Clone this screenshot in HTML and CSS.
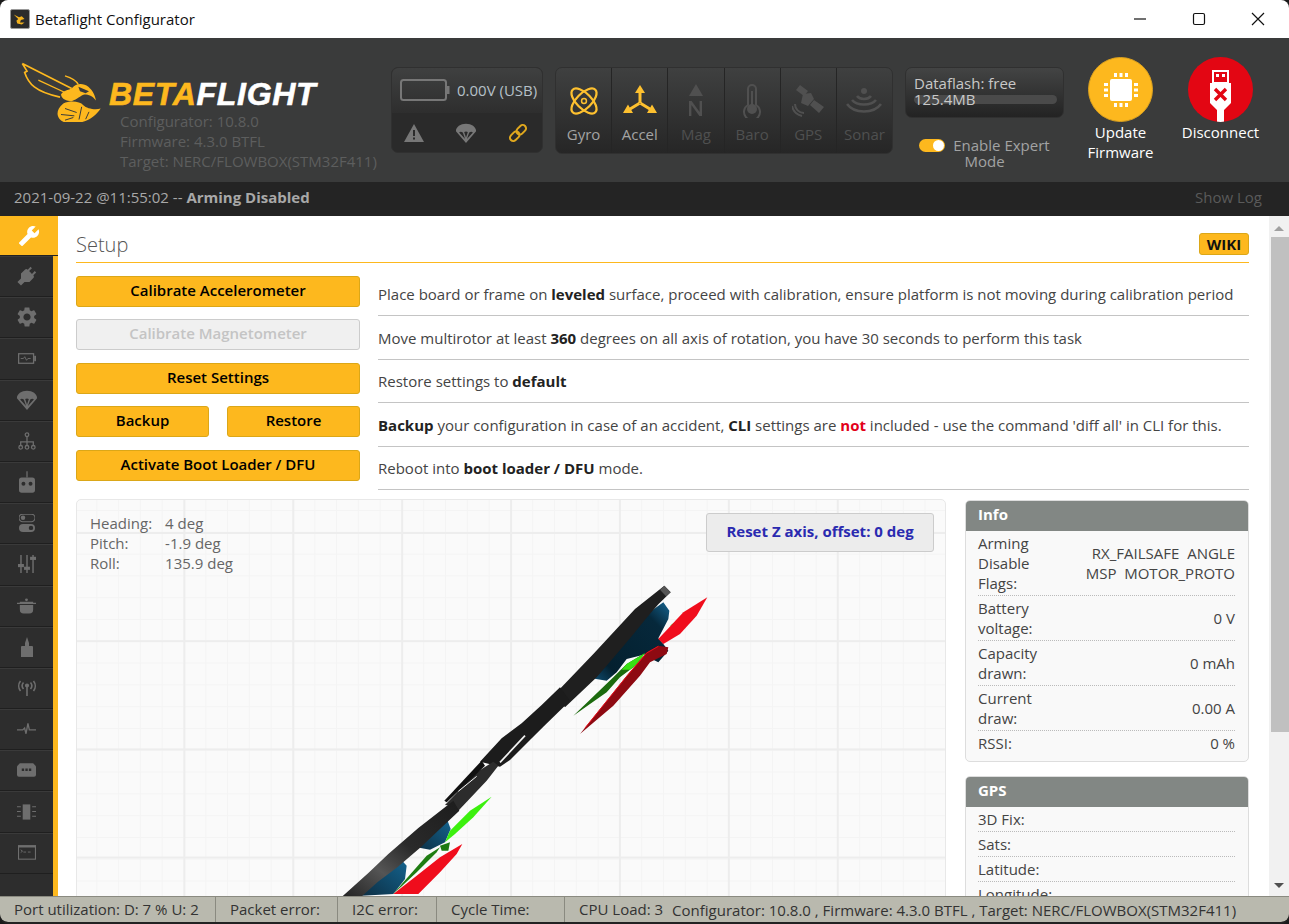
FILE: index.html
```html
<!DOCTYPE html>
<html lang="en">
<head>
    <meta charset="UTF-8">
    <title>Betaflight Configurator</title>
    <link rel="stylesheet" href="styles.css">
</head>
<body>
<div class="window">
    <div class="titlebar">
        <span class="app-icon">
            <svg viewBox="0 0 20 20" width="18" height="18"><path d="M3 5l6 3 3-1 3 3-4 1-1 3 5 0-3 2-5-1-1-3 2-2z" fill="#f2b11e"/></svg>
        </span>
        <span class="app-title">Betaflight Configurator</span>
        <div class="win-controls">
            <svg class="win-btn" viewBox="0 0 58 38"><path d="M23 19h12" stroke="#111" stroke-width="1.2"/></svg>
            <svg class="win-btn" viewBox="0 0 58 38"><rect x="23.500" y="13.500" width="11" height="11" rx="1.500" fill="none" stroke="#111" stroke-width="1.2"/></svg>
            <svg class="win-btn" viewBox="0 0 58 38"><path d="M23 13l12 12M35 13L23 25" stroke="#111" stroke-width="1.2"/></svg>
        </div>
    </div>

    <header class="topbar">
        <div class="brand">
            <div class="logo-row">
                <svg class="wasp" viewBox="0 0 270 200" width="90" height="67">
                    <g fill="none" stroke="#fdb81e" stroke-width="5">
                        <path d="M22 25L170 100M22 25L36 48 29 52C40 85 60 110 135 126"/>
                        <path d="M70 75L150 112" stroke-width="4"/>
                        <path d="M150 62C170 68 185 78 190 88" stroke-width="4"/>
                    </g>
                    <path d="M138 118C145 105 165 105 172 98 182 84 205 82 220 95 235 108 240 122 243 136 232 122 222 118 208 118 195 122 188 132 170 138 155 138 140 132 138 118z" fill="#fdb81e"/>
                    <path d="M190 95L222 108 212 114 195 108z" fill="#3a3b3b"/>
                    <path d="M145 145C165 135 195 138 205 150 215 160 240 165 257 160 240 185 215 205 165 205 130 203 112 172 145 145z" fill="#fdb81e"/>
                    <path d="M150 160l35 12M138 178l40 4M150 195l25-8M200 155l-8 38M222 170l-10 22" stroke="#3a3b3b" stroke-width="3" fill="none"/>
                </svg>
                <div class="logo-text"><span class="logo-beta">BETA</span>FLIGHT</div>
            </div>
            <div class="versions">
                <div>Configurator: 10.8.0</div>
                <div>Firmware: 4.3.0 BTFL</div>
                <div>Target: NERC/FLOWBOX(STM32F411)</div>
            </div>
        </div>

        <div class="battery-box">
            <div class="battery-top">
                <svg viewBox="0 0 50 22" width="50" height="22"><rect x="1" y="1" width="45" height="20" rx="2.500" fill="none" stroke="#777" stroke-width="2"/><rect x="47" y="7" width="2.500" height="8" fill="#777"/></svg>
                <span>0.00V (USB)</span>
            </div>
            <div class="battery-bottom">
                <svg viewBox="0 0 20 18" width="20" height="18"><path d="M10 0l10 18H0z" fill="#777"/><path d="M9 6h2v6H9zM9 13.500h2v2H9z" fill="#2b2b2b"/></svg>
                <svg viewBox="0 0 24 24" width="22" height="22"><use href="#chute" fill="#777"/></svg>
                <svg viewBox="0 0 24 24" width="20" height="20" fill="none" stroke="#e0a81e" stroke-width="2.400"><g transform="rotate(-45 12 12)"><rect x="0" y="8" width="13" height="8" rx="4"/><rect x="11" y="8" width="13" height="8" rx="4"/></g></svg>
            </div>
        </div>

        <div class="sensors">
            <div class="sensor on">
                <svg viewBox="-1 -1 34 34" width="32" height="32" fill="none" stroke="#fdc02f" stroke-width="2.400"><ellipse cx="16" cy="16" rx="17" ry="8" transform="rotate(45 16 16)"/><ellipse cx="16" cy="16" rx="17" ry="8" transform="rotate(-45 16 16)"/><circle cx="16" cy="16" r="2.600" stroke-width="1.600"/></svg>
                <span>Gyro</span>
            </div>
            <div class="sensor on">
                <svg viewBox="0 0 34 32" width="34" height="32" fill="#fdc02f"><path d="M17 0l5 8h-3.500v10h-3V8H12z"/><path d="M15.700 17l1.600 2.600-9 5.400 1.700 3H0l5-8.500 1.700 3z"/><path d="M18.300 17l-1.600 2.600 9 5.400-1.700 3H34l-5-8.500-1.700 3z"/></svg>
                <span>Accel</span>
            </div>
            <div class="sensor">
                <svg viewBox="0 0 20 34" width="20" height="34" fill="#505050"><path d="M10 0l7 12H3z"/><path d="M3 17h2.600l8 11V17H16v15h-2.600l-8-11v11H3z"/></svg>
                <span>Mag</span>
            </div>
            <div class="sensor">
                <svg viewBox="0 0 20 34" width="20" height="34"><path d="M6 20V4a4 4 0 0 1 8 0v16a8 8 0 1 1-8 0z" transform="translate(0 1)" fill="none" stroke="#505050" stroke-width="2"/><circle cx="10" cy="25" r="5" fill="#505050"/><path d="M10 7v16" stroke="#505050" stroke-width="2"/></svg>
                <span>Baro</span>
            </div>
            <div class="sensor">
                <svg viewBox="0 0 32 32" width="32" height="32" fill="#505050"><path d="M8 0l8 6-4 5-8-6zM22 15l10 7-5 6-9-8z"/><path d="M11 9l8-1 3 6-6 7-7-3z"/><path d="M3 19a9 9 0 0 0 9 9M0 21a13 13 0 0 0 10 10" fill="none" stroke="#505050" stroke-width="2"/></svg>
                <span>GPS</span>
            </div>
            <div class="sensor">
                <svg viewBox="0 0 36 28" width="36" height="28" fill="none" stroke="#505050" stroke-width="2.600"><circle cx="18" cy="4" r="3" fill="#505050" stroke="none"/><path d="M11 9c3 4 11 4 14 0M6 13c5 6 19 6 24 0M1 17c7 10 27 10 34 0"/></svg>
                <span>Sonar</span>
            </div>
        </div>

        <div class="flash-col">
            <div class="dataflash">
                <div>Dataflash: free</div>
                <div class="flash-bar">125.4MB</div>
            </div>
            <div class="expert"><span class="toggle"></span> Enable Expert Mode</div>
        </div>

        <div class="round-action update">
            <span class="circle yellow">
                <svg viewBox="0 0 40 40" width="40" height="40" fill="#fff"><rect x="9" y="9" width="22" height="22" rx="2"/><path d="M13 3h3v4h-3zM18.500 3h3v4h-3zM24 3h3v4h-3zM13 33h3v4h-3zM18.500 33h3v4h-3zM24 33h3v4h-3zM3 13h4v3H3zM3 18.500h4v3H3zM3 24h4v3H3zM33 13h4v3h-4zM33 18.500h4v3h-4zM33 24h4v3h-4z"/></svg>
            </span>
            <span>Update Firmware</span>
        </div>
        <div class="round-action disconnect">
            <span class="circle red">
                <svg viewBox="0 0 65 65" width="65" height="65"><path d="M25 14h15v12h-15z" fill="none" stroke="#fff" stroke-width="2"/><path d="M28 17h3v3h-3zM34 17h3v3h-3z" fill="#fff"/><path d="M22 26h21v20l-7 7v12h-7V53l-7-7z" fill="#fff"/><path d="M27 32l11 11M38 32L27 43" stroke="#e30613" stroke-width="3.400"/></svg>
            </span>
            <span>Disconnect</span>
        </div>
    </header>

    <div class="logbar">
        <span>2021-09-22 @11:55:02 -- <b>Arming Disabled</b></span>
        <span class="show-log">Show Log</span>
    </div>

    <div class="main">
        <nav class="sidebar">
            <a class="tab active"><svg viewBox="0 0 24 24" width="22" height="22"><path transform="translate(24 0) scale(-1 1)" d="M22.700 19l-9.100-9.100c.9-2.300.4-5-1.500-6.900-2-2-5-2.400-7.400-1.300L9 6 6 9 1.600 4.700C.4 7.100.9 10.100 2.900 12.100c1.900 1.900 4.600 2.400 6.900 1.500l9.100 9.100c.4.4 1 .4 1.400 0l2.300-2.300c.5-.4.5-1.100.1-1.400z"/></svg></a>
            <a class="tab"><svg viewBox="0 0 24 24" width="24" height="24"><path transform="rotate(45 12 12)" d="M16 7V3h-2v4h-4V3H8v4h-.01C7 6.990 6 7.990 6 8.990v5.490L9.500 18v5h5v-5l3.500-3.510v-5.500c0-1-1-2-2-1.990z"/></svg></a>
            <a class="tab"><svg viewBox="0 0 24 24" width="24" height="24"><path d="M19.140 12.940c.04-.3.06-.61.06-.94 0-.32-.02-.64-.07-.94l2.030-1.580c.18-.14.23-.41.12-.61l-1.920-3.320c-.12-.22-.37-.29-.59-.22l-2.390.96c-.5-.38-1.030-.7-1.620-.94l-.36-2.540c-.04-.24-.24-.41-.48-.41h-3.840c-.24 0-.43.17-.47.41l-.36 2.540c-.59.24-1.130.57-1.620.94l-2.390-.96c-.22-.08-.47 0-.59.22L2.740 8.870c-.12.21-.08.47.12.61l2.030 1.580c-.05.3-.09.63-.09.94s.02.64.07.94l-2.030 1.580c-.18.14-.23.41-.12.61l1.920 3.320c.12.22.37.29.59.22l2.390-.96c.5.38 1.030.7 1.620.94l.36 2.540c.05.24.24.41.48.41h3.840c.24 0 .44-.17.47-.41l.36-2.540c.59-.24 1.130-.56 1.620-.94l2.390.96c.22.08.47 0 .59-.22l1.920-3.320c.12-.22.07-.47-.12-.61l-2.010-1.580zM12 15.600c-1.980 0-3.600-1.620-3.600-3.600s1.620-3.600 3.600-3.600 3.600 1.620 3.600 3.600-1.620 3.600-3.600 3.600z"/></svg></a>
            <a class="tab"><svg viewBox="0 0 20 12" width="18" height="11"><rect x=".7" y=".7" width="16.600" height="10.600" fill="none" stroke="#6e6e6e" stroke-width="1.400"/><rect x="18" y="3" width="2" height="6"/><path d="M3 6h3l1.500-2 2 4L11 6h3" fill="none" stroke="#6e6e6e"/></svg></a>
            <a class="tab"><svg viewBox="0 0 24 24" width="22" height="22"><use href="#chute"/></svg></a>
            <a class="tab"><svg viewBox="0 0 20 20" width="18" height="18" fill="none" stroke="#6e6e6e" stroke-width="1.400"><circle cx="10" cy="3" r="2"/><circle cx="3" cy="17" r="2"/><circle cx="10" cy="17" r="2"/><circle cx="17" cy="17" r="2"/><path d="M10 5v10M3 15v-4h14v4"/></svg></a>
            <a class="tab"><svg viewBox="0 0 18 24" width="16" height="22"><path d="M8.300 0h1.400v7H8.300z"/><rect y="7" width="18" height="17" rx="3"/><circle cx="5" cy="14" r="2.200" fill="#2d2d2d"/><circle cx="13" cy="14" r="2.200" fill="#2d2d2d"/></svg></a>
            <a class="tab"><svg viewBox="0 0 18 20" width="16" height="18"><rect y="0" width="18" height="8.500" rx="4.200" fill="none" stroke="#6e6e6e" stroke-width="1.200"/><circle cx="4.500" cy="4.200" r="2.500"/><rect y="11" width="18" height="9" rx="4.500"/><circle cx="13.500" cy="15.500" r="2.500" fill="#2d2d2d"/></svg></a>
            <a class="tab"><svg viewBox="0 0 20 20" width="18" height="18"><path d="M2.500 0h1.600v20H2.500zM9.200 0h1.600v20H9.200zM15.900 0h1.600v20h-1.600z"/><rect x="0" y="10" width="6.600" height="3.500"/><rect x="6.700" y="13" width="6.600" height="3.500"/><rect x="13.400" y="2" width="6.600" height="3.500"/></svg></a>
            <a class="tab"><svg viewBox="0 0 20 16" width="19" height="16"><circle cx="10" cy="1.500" r="1.500"/><path d="M3 3.500h14v2.500H3zM3 7h14v5a4 4 0 0 1-4 4H7a4 4 0 0 1-4-4zM0 4.500h3v1.500H0zM17 4.500h3v1.500h-3z"/></svg></a>
            <a class="tab"><svg viewBox="0 0 12 20" width="12" height="20"><path d="M6 0l2 6v3H4V6zM1 9h10a1 1 0 0 1 1 1v10H0V10a1 1 0 0 1 1-1z"/></svg></a>
            <a class="tab"><svg viewBox="0 0 20 16" width="20" height="16" fill="none" stroke="#6e6e6e" stroke-width="1.600"><path d="M10 6v10"/><circle cx="10" cy="5.500" r="1.300" fill="#6e6e6e"/><path d="M6.500 2.500a5 5 0 0 0 0 6.500M13.500 2.500a5 5 0 0 1 0 6.500M3.500 1a8 8 0 0 0 0 10M16.500 1a8 8 0 0 1 0 10"/></svg></a>
            <a class="tab"><svg viewBox="0 0 20 12" width="19" height="12" fill="none" stroke="#6e6e6e" stroke-width="1.400"><path d="M0 7h6l2-2 1.500 6L11.500 0 13 7h7"/></svg></a>
            <a class="tab"><svg viewBox="0 0 20 14" width="19" height="14"><path d="M3 0h14l3 3v9a2 2 0 0 1-2 2H2a2 2 0 0 1-2-2V3z"/><path d="M5 5.500h2.500v2.500H5zM8.800 5.500h2.500v2.500H8.800zM12.500 5.500H15v2.500h-2.500z" fill="#2d2d2d"/></svg></a>
            <a class="tab"><svg viewBox="0 0 20 16" width="19" height="16"><rect x="6" y="0" width="8" height="16"/><path d="M0 2h4v1H0zM0 7h4v1H0zM0 12h4v1H0zM16 2h4v1h-4zM16 7h4v1h-4zM16 12h4v1h-4z"/></svg></a>
            <a class="tab"><svg viewBox="0 0 20 16" width="18" height="15"><rect x=".6" y=".6" width="18.800" height="14.800" fill="none" stroke="#6e6e6e" stroke-width="1.200"/><path d="M0 0h20v2.500H0z"/><path d="M3 5l2 1.500L3 8M6 7.500h3M11 7.500h3" fill="none" stroke="#6e6e6e"/></svg></a>
        </nav>

        <section class="content">
            <div class="title-row">
                <h1>Setup</h1>
                <a class="wiki">WIKI</a>
            </div>

            <div class="action-row">
                <div class="action-btns"><a class="btn">Calibrate Accelerometer</a></div>
                <p>Place board or frame on <b>leveled</b> surface, proceed with calibration, ensure platform is not moving during calibration period</p>
            </div>
            <div class="action-row">
                <div class="action-btns"><a class="btn disabled">Calibrate Magnetometer</a></div>
                <p>Move multirotor at least <b>360</b> degrees on all axis of rotation, you have 30 seconds to perform this task</p>
            </div>
            <div class="action-row">
                <div class="action-btns"><a class="btn">Reset Settings</a></div>
                <p>Restore settings to <b>default</b></p>
            </div>
            <div class="action-row">
                <div class="action-btns pair"><a class="btn">Backup</a><a class="btn">Restore</a></div>
                <p><b>Backup</b> your configuration in case of an accident, <b>CLI</b> settings are <b class="warn">not</b> included - use the command 'diff all' in CLI for this.</p>
            </div>
            <div class="action-row">
                <div class="action-btns"><a class="btn">Activate Boot Loader / DFU</a></div>
                <p>Reboot into <b>boot loader / DFU</b> mode.</p>
            </div>

            <div class="lower">
                <div class="model-view">
                    <table class="attitude">
                        <tr><td>Heading:</td><td>4 deg</td></tr>
                        <tr><td>Pitch:</td><td>-1.9 deg</td></tr>
                        <tr><td>Roll:</td><td>135.9 deg</td></tr>
                    </table>
                    <a class="reset-z">Reset Z axis, offset: 0 deg</a>
                    <svg class="quad" viewBox="0 0 1200 960" width="400" height="320">
                        <defs>
                            <linearGradient id="blue" x1="1" y1="0" x2="0" y2="1"><stop offset="0" stop-color="#14638f"/><stop offset=".22" stop-color="#06283b"/><stop offset=".8" stop-color="#04202f"/><stop offset="1" stop-color="#0f4f74"/></linearGradient>
                            <linearGradient id="blue2" x1="0" y1="1" x2="1" y2="0"><stop offset="0" stop-color="#0d2f44"/><stop offset="1" stop-color="#14648f"/></linearGradient>
                            <linearGradient id="arm" x1="0" y1="1" x2="1" y2="0"><stop offset="0" stop-color="#222"/><stop offset=".3" stop-color="#555"/><stop offset=".55" stop-color="#2a2a2a"/><stop offset="1" stop-color="#1d1d1d"/></linearGradient>
                        </defs>
                        <path d="M1000 70L1018 95 1015 120 985 178 1000 195 1015 215 985 250 965 240 950 225 890 240 860 280 830 305 785 298 830 240 860 170z" fill="url(#blue)"/>
                        <path d="M350 718l12 32-17 40-45 22-40-7 30-35z" fill="url(#blue2)"/>
                        <path d="M210 838l20 22-5 40-35 45-95 5 60-70z" fill="url(#blue2)"/>
                        <path d="M1003 20L1022 40 985 76 950 116 905 172 860 225 800 295 705 385 675 345 790 225 915 90z" fill="#1f1f1f"/>
                        <path d="M1003 20L1022 40 1008 52 990 32z" fill="#555"/>
                        <path d="M690 325l30 40-80 78-40 40-60 60-30 20-60-15 65-70 60-45 60-55z" fill="#1c1c1c"/>
                        <path d="M490 548l15 12-35 45-85 90-15-15-25-2 95-98z" fill="#2c2c2c"/>
                        <path d="M455 545l10 15-115 110-7-5z" fill="#111"/>
                        <path d="M585 470l-75 80" stroke="#f4f4f4" stroke-width="5" fill="none"/>
                        <path d="M440 592l-55 45" stroke="#f4f4f4" stroke-width="3" fill="none"/>
                        <path d="M370 665l18 30-55 52-60 57-70 60-60 45-50 45H35l80-72 60-57 90-78z" fill="url(#arm)"/>
                        <path d="M1060 110l-40 30 15-2 25-20z" fill="#2ad40f"/>
                        <path d="M945 222l-55 33-40 40-120 115 100-70 40-45 40-30z" fill="#1c6a0e"/>
                        <path d="M945 222l-55 33-15 17 25 0 25-20z" fill="#38e013"/>
                        <path d="M1132 55l-72 45-75 80 15 15 50-30 50-55z" fill="#f00d1c"/>
                        <path d="M1015 205l-30-5-35 20-60 70-140 175 100-85 80-90 30-40 50-25z" fill="#8e0a12"/>
                        <path d="M985 202l-35 20-60 70-125 155" stroke="#e8101c" stroke-width="3" fill="none"/>
                        <path d="M485 653l-65 42-60 60-15 35 30-25 55-50z" fill="#3cf00e"/>
                        <path d="M330 800l30-10-5 25-20 0z" fill="#1d7a10"/>
                        <path d="M330 805l-40 25-70 80-30 35 70-65 60-60z" fill="#1f7d12"/>
                        <path d="M397 795l-67 40-70 55-70 55h75l65-65 50-55z" fill="#f00d1c"/>
                    </svg>
                </div>

                <aside class="side-panels">
                    <div class="panel">
                        <div class="panel-head">Info</div>
                        <div class="panel-row"><span class="key">Arming Disable Flags:</span><span class="val">RX_FAILSAFE&nbsp; ANGLE<br>MSP&nbsp; MOTOR_PROTO</span></div>
                        <div class="panel-row"><span class="key">Battery voltage:</span><span class="val">0 V</span></div>
                        <div class="panel-row"><span class="key">Capacity drawn:</span><span class="val">0 mAh</span></div>
                        <div class="panel-row"><span class="key">Current draw:</span><span class="val">0.00 A</span></div>
                        <div class="panel-row last"><span class="key">RSSI:</span><span class="val">0 %</span></div>
                    </div>
                    <div class="panel">
                        <div class="panel-head">GPS</div>
                        <div class="panel-row"><span class="key">3D Fix:</span></div>
                        <div class="panel-row"><span class="key">Sats:</span></div>
                        <div class="panel-row"><span class="key">Latitude:</span></div>
                        <div class="panel-row"><span class="key">Longitude:</span></div>
                    </div>
                </aside>
            </div>
        </section>

        <div class="scrollbar">
            <span class="arrow up"></span>
            <div class="thumb"></div>
            <span class="arrow down"></span>
        </div>
    </div>

    <footer class="statusbar">
        <span class="stat s1">Port utilization: D: 7 % U: 2</span>
        <span class="stat s2">Packet error:</span>
        <span class="stat s3">I2C error:</span>
        <span class="stat s4">Cycle Time:</span>
        <span class="stat s5">CPU Load: 3</span>
        <span class="stat-version">Configurator: 10.8.0 , Firmware: 4.3.0 BTFL , Target: NERC/FLOWBOX(STM32F411)</span>
    </footer>
</div>

<svg class="defs" width="0" height="0">
    <symbol id="chute" viewBox="0 0 24 24">
        <path d="M12 2C6 2 1 5.500 1 10l11 13 11-13C23 5.500 18 2 12 2zM4.500 11.500c1-1 2.500-1 4 0l2.500 7zM13 18.500l2.500-7c1.500-1 3-1 4 0zM10 11c1.300-.8 2.700-.8 4 0l-2 6z" fill-rule="evenodd"/>
    </symbol>
</svg>
</body>
</html>
```

FILE: styles.css
```css
* {
    box-sizing: border-box;
}

html, body {
    margin: 0;
    height: 924px;
    overflow: hidden;
    background: #1a1a1a;
}

body {
    font-family: "Open Sans", "Noto Sans", sans-serif;
    font-size: 15px;
    color: #333;
}

.window {
    width: 1289px;
    height: 924px;
    display: flex;
    flex-direction: column;
    border-radius: 8px;
    overflow: hidden;
    border-bottom: 2px solid #222;
}

.defs {
    position: absolute;
}

/* title bar */
.titlebar {
    height: 38px;
    background: #fff;
    display: flex;
    align-items: center;
    padding-left: 10px;
    flex: none;
}

.app-icon {
    width: 20px;
    height: 20px;
    background: #2b2b2b;
    border: 1px solid #999;
    border-radius: 2px;
    display: flex;
    align-items: center;
    justify-content: center;
    margin-right: 5px;
}

.app-title {
    color: #111;
}

.win-controls {
    margin-left: auto;
    display: flex;
    margin-right: 2px;
}

.win-btn {
    width: 58px;
    height: 38px;
    margin-left: 1px;
}

/* top bar */
.topbar {
    height: 144px;
    flex: none;
    background: #3a3b3b;
    display: flex;
    padding-left: 20px;
    color: #ccc;
}

.brand {
    width: 371px;
    padding-top: 20px;
}

.logo-row {
    display: flex;
    height: 54px;
}

.wasp {
    margin-left: -5px;
    margin-top: -3px;
}

.logo-text {
    font-family: "Liberation Sans", Arial, sans-serif;
    font-weight: bold;
    font-style: italic;
    font-size: 32px;
    line-height: 32px;
    color: #fff;
    -webkit-text-stroke: .6px currentColor;
    margin-left: 4px;
    margin-top: 20px;
    letter-spacing: .7px;
}

.logo-beta {
    color: #fdb81e;
}

.versions {
    margin-left: 100px;
    color: #5d5e5e;
    line-height: 20px;
    margin-top: -1px;
    white-space: nowrap;
}

.battery-box {
    width: 152px;
    height: 86px;
    margin-top: 29px;
    border-radius: 7px;
    border: 1px solid #303030;
    overflow: hidden;
    background: #2a2a2a;
}

.battery-top {
    height: 45px;
    display: flex;
    align-items: center;
    gap: 7px;
    padding: 0 0 2px 8px;
    background: linear-gradient(#3f4040, #2e2e2e);
    color: #b5c0c8;
    white-space: nowrap;
}

.battery-bottom {
    display: flex;
    align-items: center;
    height: 39px;
    padding: 0 14px 0 12px;
    justify-content: space-between;
}

.sensors {
    width: 338px;
    height: 87px;
    margin: 29px 0 0 12px;
    display: flex;
    border-radius: 7px;
    border: 1px solid #303030;
    overflow: hidden;
    background: linear-gradient(#3f4040, #262626);
}

.sensor {
    flex: 1;
    display: flex;
    flex-direction: column;
    align-items: center;
    justify-content: flex-end;
    border-right: 1px solid #252525;
    color: #4f5050;
    padding-bottom: 9px;
    gap: 6px;
}

.sensor:last-child {
    border-right: none;
}

.sensor svg {
    height: 34px;
}

.sensor.on {
    color: #a2a3a3;
}

.flash-col {
    width: 159px;
    margin: 29px 0 0 12px;
}

.dataflash {
    height: 51px;
    border-radius: 7px;
    border: 1px solid #303030;
    background: linear-gradient(#434444, #232323);
    padding: 7px 6px 0 8px;
    line-height: 17px;
    color: #c8c8c8;
}

.flash-bar {
    background: #4a4a4a;
    border-radius: 5px;
    height: 9px;
    line-height: 9px;
    margin-top: 3px;
}

.expert {
    margin: 20px 0 0 0;
    text-align: center;
    line-height: 15.500px;
    color: #a2a3a3;
    padding: 0 8px;
}

.toggle {
    display: inline-block;
    width: 26px;
    height: 13px;
    border-radius: 7px;
    background: #fdb81e;
    position: relative;
    vertical-align: -1px;
    margin-right: 4px;
}

.toggle::after {
    content: "";
    position: absolute;
    right: 1px;
    top: 1px;
    width: 11px;
    height: 11px;
    background: #fff;
    border-radius: 50%;
}

.round-action {
    width: 90px;
    margin-top: 19px;
    display: flex;
    flex-direction: column;
    align-items: center;
    text-align: center;
    color: #fff;
    line-height: 20px;
}

.update {
    margin-left: 11.500px;
}

.disconnect {
    margin-left: 10px;
}

.circle {
    width: 65px;
    height: 65px;
    border-radius: 50%;
    display: flex;
    align-items: center;
    justify-content: center;
    overflow: hidden;
    flex: none;
}

.yellow {
    background: #fdb81e;
    border: 1px solid #d9a020;
}

.red {
    background: #e30613;
}

/* status line under the top bar */
.logbar {
    height: 34px;
    flex: none;
    background: #242424;
    display: flex;
    justify-content: space-between;
    align-items: center;
    padding: 0 27px 4px 14px;
    color: #a8a8a8;
}

.logbar b {
    font-weight: 700;
}

.show-log {
    color: #5a5a5a;
}

.main {
    height: 680px;
    flex: none;
    display: flex;
    background: #fff;
}

/* left tabs */
.sidebar {
    width: 58px;
    flex: none;
    background: #2d2d2d;
    border-right: 5px solid #fdb81e;
    display: flex;
    flex-direction: column;
}

.tab {
    height: 41.200px;
    flex: none;
    display: flex;
    align-items: center;
    justify-content: center;
    fill: #6e6e6e;
    border-bottom: 1px solid #1f1f1f;
    box-shadow: inset 0 1px 0 #3a3a3a;
}

.tab.active {
    height: 40px;
    fill: #fff;
    background: #fdb81e;
    border-bottom: 1px solid #222;
    box-shadow: none;
    margin-right: -5px;
}

.content {
    width: 1211px;
    flex: none;
    padding: 0 20px 0 18px;
    overflow: hidden;
}

.title-row {
    height: 47px;
    display: flex;
    justify-content: space-between;
    align-items: flex-end;
    border-bottom: 1px solid #fdb81e;
    margin-bottom: 9.900px;
    padding-bottom: 7px;
}

h1 {
    margin: 0 0 -3px;
    font-size: 20px;
    font-weight: 300;
    color: #555;
    line-height: 26px;
}

.wiki {
    background: #fdb81e;
    border: 1px solid #dba718;
    border-radius: 3px;
    color: #111;
    font-weight: 700;
    width: 50px;
    height: 22px;
    line-height: 20px;
    text-align: center;
}

.action-row {
    display: flex;
    height: 43.500px;
}

.action-btns {
    width: 284px;
    flex: none;
    margin-top: 3px;
    display: flex;
    gap: 18px;
}

.btn {
    flex: 1;
    height: 31px;
    line-height: 27px;
    background: #fdb81e;
    border: 1px solid #dba718;
    border-radius: 3px;
    text-align: center;
    font-weight: 600;
    color: #000;
}

.btn.disabled {
    background: #f0f0f0;
    border-color: #ccc;
    color: #c4c4c4;
}

.action-row p {
    flex: 1;
    margin: 0 0 0 18px;
    border-bottom: 1px solid #c4c4c4;
    padding-top: 11.500px;
    line-height: 20px;
    color: #444;
    white-space: nowrap;
}

.action-row b {
    color: #222;
}

.action-row b.warn {
    color: #e2001a;
}

.lower {
    display: flex;
    gap: 19px;
    margin-top: 9px;
}

.model-view {
    width: 870px;
    height: 420px;
    flex: none;
    position: relative;
    border: 1px solid #e8e8e8;
    border-radius: 5px 5px 0 0;
    background-color: #fafafa;
    background-image:
        linear-gradient(#ededed 2px, transparent 2px),
        linear-gradient(90deg, #ededed 2px, transparent 2px),
        linear-gradient(#f4f4f4 1px, transparent 1px),
        linear-gradient(90deg, #f4f4f4 1px, transparent 1px);
    background-size: 108.200px 108.200px, 108.900px 108.900px, 21.800px 21.800px, 21.800px 21.800px;
    background-position: 0 32px, -2.500px 0, 0 10px, -2.500px 0;
}

.attitude {
    position: absolute;
    left: 11px;
    top: 13px;
    border-spacing: 0;
    color: #666;
}

.attitude td {
    padding: 0 11px 0 2px;
    height: 20px;
    line-height: 20px;
}

.reset-z {
    position: absolute;
    left: 629px;
    top: 13px;
    width: 228px;
    height: 39px;
    line-height: 35px;
    text-align: center;
    font-weight: 700;
    color: #2a2ab0;
    background: #ececec;
    border: 1px solid #ccc;
    border-radius: 3px;
}

.quad {
    position: absolute;
    left: 253px;
    top: 79px;
}

.side-panels {
    width: 284px;
    flex: none;
}

.panel {
    border: 1px solid #ddd;
    border-radius: 5px;
    overflow: hidden;
    background: #f9f9f9;
    margin: 1px 0 14px;
}

.panel-head {
    background: #828784;
    color: #fff;
    font-weight: 700;
    height: 30px;
    line-height: 26px;
    padding-left: 12px;
}

.panel-row {
    display: flex;
    justify-content: space-between;
    align-items: center;
    margin: 0 13px 0 12px;
    padding: 2px 0;
    line-height: 20px;
    border-bottom: 1px dotted #bbb;
    color: #444;
}

.panel-row.last {
    border-bottom: none;
    padding-bottom: 8px;
}

.key {
    width: 75px;
    flex: none;
}

.val {
    text-align: right;
    flex: 1;
}

/* fake scroll bar */
.scrollbar {
    width: 20px;
    flex: none;
    background: #f1f1f1;
    display: flex;
    flex-direction: column;
    align-items: center;
}

.thumb {
    width: 18px;
    height: 495px;
    background: #c0c0c0;
    margin-right: -1px;
}

.arrow {
    width: 0;
    height: 0;
    border-left: 5px solid transparent;
    border-right: 5px solid transparent;
}

.arrow.up {
    border-bottom: 5px solid #a0a0a0;
    margin: 10px 0 6px;
}

.arrow.down {
    border-top: 5px solid #505050;
    margin-top: auto;
    margin-bottom: 8px;
}

/* status bar */
.statusbar {
    height: 26px;
    flex: none;
    background: #b9b9ae;
    border-top: 1px solid #8a8a80;
    display: flex;
    align-items: center;
    border-radius: 0 0 8px 8px;
    color: #333;
    white-space: nowrap;
}

.stat {
    height: 100%;
    line-height: 25px;
    border-right: 1px solid #8a8a80;
    padding-left: 14px;
}

.s1 { width: 216px; }
.s2 { width: 122px; }
.s3 { width: 99px; }
.s4 { width: 128px; }

.s5 {
    border-right: none;
    margin-right: 9px;
}
```
